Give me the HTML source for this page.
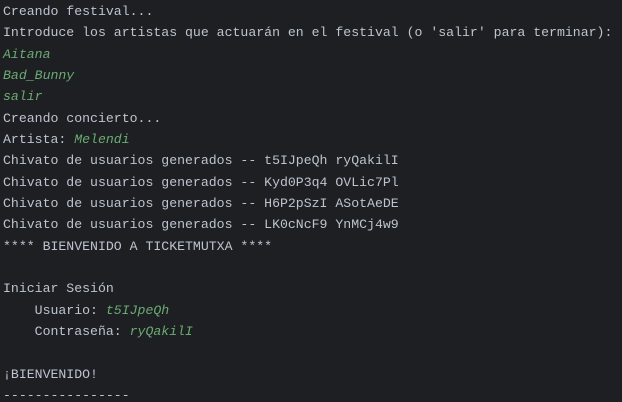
<!DOCTYPE html>
<html><head><meta charset="utf-8"><style>
html,body{margin:0;padding:0;background:#1e1f22;width:622px;height:402px;overflow:hidden}
pre{margin:0;padding:0 0 0 3px;font-family:"Liberation Mono",monospace;font-size:13.2px;line-height:21.33px;color:#bcc4d0;position:relative;top:1px}
i{color:#6aab73;font-style:italic}
</style></head><body><pre>Creando festival...
Introduce los artistas que actuarán en el festival (o 'salir' para terminar):
<i>Aitana</i>
<i>Bad_Bunny</i>
<i>salir</i>
Creando concierto...
Artista: <i>Melendi</i>
Chivato de usuarios generados -- t5IJpeQh ryQakilI
Chivato de usuarios generados -- Kyd0P3q4 OVLic7Pl
Chivato de usuarios generados -- H6P2pSzI ASotAeDE
Chivato de usuarios generados -- LK0cNcF9 YnMCj4w9
**** BIENVENIDO A TICKETMUTXA ****

Iniciar Sesión
    Usuario: <i>t5IJpeQh</i>
    Contraseña: <i>ryQakilI</i>

¡BIENVENIDO!
----------------
</pre></body></html>
